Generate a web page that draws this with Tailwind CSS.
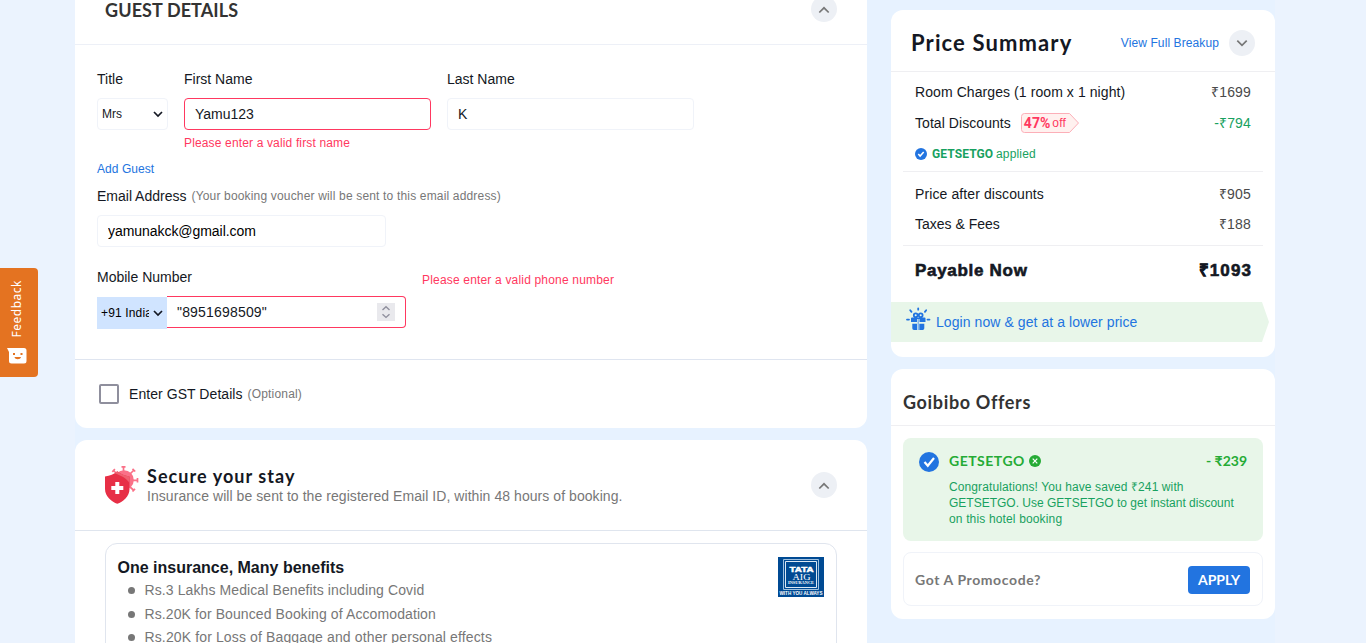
<!DOCTYPE html>
<html lang="en">
<head>
<meta charset="utf-8">
<title>Guest Details</title>
<script src="https://cdn.jsdelivr.net/npm/@tailwindcss/browser@4"></script>
</head>
<body class="h-[643px] overflow-hidden bg-[#ebf3fe] font-['Liberation_Sans',Arial,sans-serif] text-sm leading-4 text-[#141823]">
<div class="ml-[75px] flex h-[643px] w-[1200px] gap-6 bg-[#e7f2ff]">
  <main class="flex w-[792px] shrink-0 flex-col gap-3">
    <section class="h-[428px] shrink-0 overflow-hidden rounded-b-xl bg-white">
      <header class="flex h-[45px] items-start justify-between border-b border-[#edf0f7] pr-[30px] pl-[30px]">
        <h2 class="-mt-[2px] font-['Lato',sans-serif] text-[18px] leading-6 font-bold text-[#333] whitespace-nowrap"><span class="tracking-[0.1px]">GUEST DETAILS</span></h2>
        <div class="-mt-1 flex size-[26px] items-center justify-center rounded-full bg-[#edf0f5] pt-px">
          <svg class="size-3" viewBox="0 0 12 12" fill="none" stroke="#777" stroke-width="1.7"><path d="M1.3 8.500 6 3.800 10.700 8.500"/></svg>
        </div>
      </header>
      <div class="h-[314px] pt-[26px] pl-[22px]">
        <div class="flex gap-4">
          <div class="w-[71px]">
            <div>Title</div>
            <div class="mt-[11px] flex h-8 items-center justify-between rounded border border-[#f0f3f9] pr-1 pl-1"><span class="text-xs">Mrs</span>
              <svg class="h-2 w-2.5" viewBox="0 0 10 8" fill="none" stroke="#141823" stroke-width="1.7"><path d="M1 2 5 6 9 2"/></svg></div>
          </div>
          <div class="w-[247px]">
            <div>First Name</div>
            <input class="mt-[11px] block h-8 w-full rounded border border-[#ff3860] px-2.5" value="Yamu123">
            <div class="mt-[5px] text-xs tracking-[0.15px] text-[#ff3860]">Please enter a valid first name</div>
          </div>
          <div class="w-[247px]">
            <div>Last Name</div>
            <input class="mt-[11px] block h-8 w-full rounded border border-[#f0f3f9] px-2.5" value="K">
          </div>
        </div>
        <div class="mt-2.5 text-xs tracking-[0.05px] text-[#2274e0]">Add Guest</div>
        <div class="mt-[11px] flex items-center gap-[5px]"><span>Email Address</span><span class="text-xs tracking-[0.17px] text-[#777]">(Your booking voucher will be sent to this email address)</span></div>
        <input class="mt-[11px] block h-8 w-[289px] rounded border border-[#f0f3f9] px-2.5 text-black tracking-[-0.05px]" value="yamunakck@gmail.com">
        <div class="mt-[22px] flex h-[27px]"><span class="w-[325px]">Mobile Number</span><span class="mt-[3px] text-xs tracking-[0.18px] text-[#ff3860]">Please enter a valid phone number</span></div>
        <div class="flex">
          <div class="mt-px flex h-8 w-[70px] items-center justify-between bg-[#d0e4ff] pr-1 pl-1 text-xs text-black">
            <span class="w-[48px] overflow-hidden whitespace-nowrap tracking-[0.15px]">+91 India</span>
            <svg class="h-2 w-2.5 shrink-0" viewBox="0 0 10 8" fill="none" stroke="#141823" stroke-width="1.7"><path d="M1 2 5 6 9 2"/></svg>
          </div>
          <div class="flex h-8 w-[239px] items-center justify-between rounded-r border border-l-0 border-[#ff3860] pr-2.5 pl-2.5">
            <span class="tracking-[0.18px]">"8951698509"</span>
            <svg class="size-[18px]" viewBox="0 0 18 18" fill="none" stroke="#8f8f9d" stroke-width="1.4"><path fill="#e9e9ed" stroke="none" d="M0 0h18v18H0z"/><path d="M5.500 7 9 3.800l3.500 3.200M5.500 11.200 9 14.400l3.500-3.200"/></svg>
          </div>
        </div>
      </div>
      <div class="flex h-[69px] items-center border-t border-[#dfe5f0] pl-6">
        <span class="size-5 rounded-[2px] border-2 border-[#8f8f9d]"></span><span class="ml-2.5 tracking-[0.06px]">Enter GST Details</span><span class="ml-[5px] text-xs tracking-[0.17px] text-[#777]">(Optional)</span>
      </div>
    </section>

    <section class="h-[220px] shrink-0 overflow-hidden rounded-t-xl bg-white">
      <header class="flex h-[91px] items-center border-b border-[#dfe5ee] px-[30px]">
        <svg class="h-[40px] w-[34px] shrink-0" viewBox="0 0 34 40">
          <circle cx="19" cy="15" r="9.800" fill="#fa7188"/>
          <path fill="none" stroke="#fa7188" stroke-width="1.700" d="M18.500 1.500V6M16.500 1.800h4M25 9l4-4M27.500 3.800l2.700 2.700M28 15.300h4.500M32.500 13v4.600M25 22l4 3.500M27.500 26.500l2.500-2.700M12 9 8.500 5.500M7.300 6.800l2.600-2.600"/>
          <path fill="#e72f46" d="M0 11.500C5 11 9 9 12.300 6.300 16 9 20 11 24.500 11.500V24C24.500 31.500 18 37 12.300 38.700 7 37 0 31.500 0 24Z"/>
          <path fill="#ef6070" d="M9.500 8.300 12.300 6.300C16 9 20 11 24.500 11.500V18C21.500 13 15.500 10.500 9.500 8.300Z"/>
          <path fill="#fff" d="M10.300 17h4v4h4v4h-4v4h-4v-4h-4v-4h4z"/>
        </svg>
        <div class="ml-2 flex-1 pt-px">
          <h2 class="font-['Lato',sans-serif] text-[18px] leading-[22px] font-bold tracking-[1.050px]">Secure your stay</h2>
          <p class="leading-[19px] tracking-[0.06px] text-[#777]">Insurance will be sent to the registered Email ID, within 48 hours of booking.</p>
        </div>
        <div class="flex size-[26px] items-center justify-center rounded-full bg-[#edf0f5] pt-px">
          <svg class="size-3" viewBox="0 0 12 12" fill="none" stroke="#777" stroke-width="1.7"><path d="M1.300 8.500 6 3.800 10.700 8.500"/></svg>
        </div>
      </header>
      <div class="mx-[30px] mt-3 flex h-[140px] items-start justify-between rounded-t-xl border border-[#e0e5ee] pt-[13px] pr-3 pl-[11.500px]">
        <div class="text-[#777]">
          <h3 class="h-[22px] text-base leading-[22px] font-bold text-[#141823]">One insurance, Many benefits</h3>
          <ul class="pl-[10px] leading-[23.500px] tracking-[0.100px]">
            <li class="flex items-center gap-[10px]"><i class="size-[7px] rounded-full bg-[#777]"></i>Rs.3 Lakhs Medical Benefits including Covid</li>
            <li class="flex items-center gap-[10px]"><i class="size-[7px] rounded-full bg-[#777]"></i>Rs.20K for Bounced Booking of Accomodation</li>
            <li class="flex items-center gap-[10px] tracking-[0.130px]"><i class="size-[7px] rounded-full bg-[#777]"></i>Rs.20K for Loss of Baggage and other personal effects</li>
          </ul>
        </div>
        <svg class="h-10 w-[46px]" viewBox="0 0 46 40" text-anchor="middle" fill="#fff">
          <path fill="#004a93" d="M0 0h46v40H0z"/><path fill="none" stroke="#9fc0df" d="M5.500 2.500h35v30h-35z"/><path fill="none" stroke="#dce8f4" d="M7.500 4.500h31v26h-31z"/>
          <text x="23.500" y="15" font-family="Liberation Sans" font-weight="bold" font-size="8" stroke="#fff" stroke-width=".5" textLength="24" lengthAdjust="spacingAndGlyphs">TATA</text>
          <text x="23.500" y="22.500" font-family="Liberation Serif" font-size="9" textLength="18" lengthAdjust="spacingAndGlyphs">AIG</text>
          <text x="23" y="26.500" font-family="Liberation Serif" font-weight="bold" font-size="4" textLength="26" lengthAdjust="spacingAndGlyphs">INSURANCE</text>
          <text x="23" y="38" font-family="Liberation Sans" font-weight="bold" font-size="4.500" textLength="43" lengthAdjust="spacingAndGlyphs">WITH YOU ALWAYS</text>
        </svg>
      </div>
    </section>
  </main>

  <aside class="flex w-[384px] shrink-0 flex-col gap-3 pt-2.5">
    <section class="h-[347px] shrink-0 rounded-xl bg-white">
      <header class="flex h-[62px] items-center border-b border-[#efeff2] px-5 pt-1">
        <h2 class="flex-1 font-['Lato',sans-serif] text-[22px] leading-7 font-bold tracking-[1.120px]">Price Summary</h2>
        <a class="mr-2.5 text-xs tracking-[0.100px] text-[#2274e0]">View Full Breakup</a>
        <div class="flex size-[26px] items-center justify-center rounded-full bg-[#edf0f5]">
          <svg class="size-3" viewBox="0 0 12 12" fill="none" stroke="#777" stroke-width="1.700"><path d="M1.300 3.700 6 8.400 10.700 3.700"/></svg>
        </div>
      </header>
      <div class="mx-3 h-[100px] border-b border-[#efeff2] px-3 pt-3">
        <div class="flex justify-between"><span class="tracking-[0.080px]">Room Charges (1 room x 1 night)</span><span class="tracking-[0.150px] text-[#4a4a4a]">₹1699</span></div>
        <div class="mt-[13px] flex h-5 items-center">
          <span class="tracking-[0.060px]">Total Discounts</span>
          <span class="relative ml-2.5 flex h-5 w-[58px] items-center gap-[2px] pl-[3px] text-xs text-[#ff3860]">
            <svg class="absolute inset-0 h-5 w-[58px]" viewBox="0 0 58 20" fill="#fff1ef" stroke="#fcafb8"><path d="M3.500.5H48.500L57.500 10 48.500 19.500H3.500a3 3 0 0 1-3-3V3.500a3 3 0 0 1 3-3Z"/></svg>
            <b class="relative font-['Roboto',sans-serif] text-sm">47%</b><span class="relative tracking-[0.200px]">off</span>
          </span>
          <span class="ml-auto -mt-px tracking-[0.150px] text-[#18a160]">-₹794</span>
        </div>
        <div class="mt-[13px] flex items-center text-xs text-[#18a160]">
          <svg class="mr-[5px] size-3" viewBox="0 0 20 20"><circle cx="10" cy="10" r="10" fill="#2274e0"/><path d="m5.500 10 3 3.500 6-7" fill="none" stroke="#fff" stroke-width="2.500"/></svg>
          <b class="w-[64px] font-['Roboto',sans-serif] tracking-[0.100px]">GETSETGO</b><span class="tracking-[0.170px]">applied</span>
        </div>
      </div>
      <div class="mx-3 h-[74px] border-b border-[#efeff2] px-3 pt-3.5">
        <div class="flex justify-between"><span class="tracking-[0.100px]">Price after discounts</span><span class="tracking-[0.200px] text-[#4a4a4a]">₹905</span></div>
        <div class="mt-3.5 flex justify-between"><span>Taxes &amp; Fees</span><span class="tracking-[0.200px] text-[#4a4a4a]">₹188</span></div>
      </div>
      <div class="flex h-[56px] items-center justify-between px-6 pb-[7px] text-[17px] font-bold [-webkit-text-stroke:0.600px_#141823]"><span class="tracking-[0.700px]">Payable Now</span><span class="-mr-px tracking-[1.100px]">₹1093</span></div>
      <div class="flex h-10 w-[378px] items-center bg-[#e8f6e9] pl-[15px] text-[#2274e0] [clip-path:polygon(0_0,371px_0,378px_50%,371px_100%,0_100%)]">
        <svg class="-mt-1 mr-[6px] h-6 w-6 overflow-visible" viewBox="0 0 24 24" fill="#2274e0">
          <path d="M5 10.500a1 1 0 0 1 1-1h12.500a1 1 0 0 1 1 1V14H13.500V11H11v3H5zM6.300 15.700H11V22H8a1.700 1.700 0 0 1-1.700-1.700zM13.300 15.700H18.300V20.300A1.700 1.700 0 0 1 16.600 22H13.300z"/>
          <path fill="#86b6ec" d="M11.500 11h1.500v11h-1.500z"/>
          <g fill="none" stroke="#2274e0" stroke-width="1.800" stroke-linecap="round"><circle cx="9.700" cy="7.200" r="1.900"/><circle cx="14.700" cy="7.200" r="1.900"/><path d="M12.200.3v1.400M4.200 2.200l1.300 1.700M20.200 2.200l-1.300 1.700M1 11.600h2M21.500 11.600h2"/></g>
        </svg>
        <span class="tracking-[0.070px]">Login now &amp; get at a lower price</span>
      </div>
    </section>

    <section class="h-[250px] shrink-0 rounded-xl bg-white">
      <header class="flex h-[57px] items-center border-b border-[#efeff2] px-3 pt-2.5"><h2 class="font-['Lato',sans-serif] text-[18px] font-bold tracking-[0.650px] text-[#333]">Goibibo Offers</h2></header>
      <div class="mx-3 mt-3 flex h-[103px] rounded-lg bg-[#e8f6e9] pt-3.5 pr-4 pl-4">
        <svg class="mr-2.5 size-5 shrink-0" viewBox="0 0 20 20"><circle cx="10" cy="10" r="10" fill="#2274e0"/><path d="m5.500 10 3.300 3.800L15 6" fill="none" stroke="#fff" stroke-width="2.200"/></svg>
        <div class="flex-1">
          <div class="flex h-[18px] items-center font-['Lato',sans-serif] font-bold text-[#25ab35]">
            <span class="tracking-[0.500px]">GETSETGO</span>
            <svg class="ml-1 size-3" viewBox="0 0 12 12"><circle cx="6" cy="6" r="6" fill="#25ab35"/><path d="m3.700 3.700 4.600 4.600M8.300 3.700 3.700 8.300" stroke="#fff" stroke-width="1.200"/></svg>
            <span class="ml-auto">- ₹239</span>
          </div>
          <p class="mt-[9px] text-xs leading-4 whitespace-nowrap text-[#18a160]"><span class="tracking-[0.100px]">Congratulations! You have saved ₹241 with</span><br>GETSETGO. Use GETSETGO to get instant discount<br><span class="tracking-[0.150px]">on this hotel booking</span></p>
        </div>
      </div>
      <div class="mx-3 mt-[11px] flex h-[54px] items-center justify-between rounded-lg border border-[#f0f3f9] pt-0.5 pr-3 pl-[11px] font-['Lato',sans-serif] font-bold">
        <span class="tracking-[0.600px] text-[#777]">Got A Promocode?</span>
        <button class="h-7 w-[62px] rounded bg-[#2274e0] text-white">APPLY</button>
      </div>
    </section>
  </aside>
</div>
<div class="absolute top-[268px] left-0 flex h-[109px] w-[38px] flex-col items-center justify-between rounded-r bg-[#e47321] pt-3 pb-[13px]">
  <span class="-ml-1 rotate-180 font-['Noto_Sans',sans-serif] text-xs leading-4 tracking-[0.500px] text-white [writing-mode:vertical-rl]">Feedback</span>
  <svg class="-ml-1 h-4 w-5" viewBox="0 0 20 16"><path fill="#fff" d="M0 0h17a2.500 2.500 0 0 1 2.500 2.500V13a2.500 2.500 0 0 1-2.500 2.500H4.500A2.500 2.500 0 0 1 2 13V4Z"/><path fill="#e47321" d="M6 5h2v2H6zM13.500 5h2v2h-2zM7.500 9h6.500c-.5 3-6 3-6.500 0z"/></svg>
</div>
</body>
</html>
